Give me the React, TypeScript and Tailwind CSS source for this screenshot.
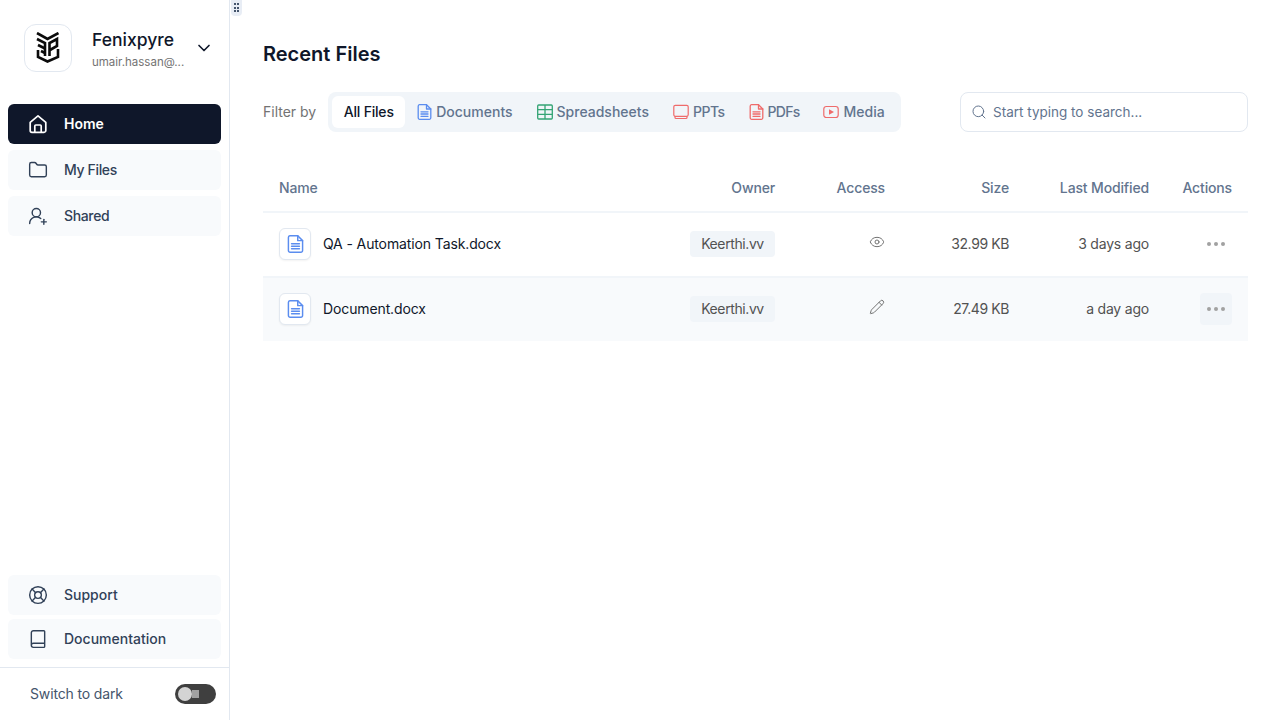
import { Book, ChevronDown, Eye, Folder, LifeBuoy, Pencil, Search, UserRoundPlus } from 'lucide-react'
import type { ReactNode } from 'react'

const FONT = "font-['Inter','Liberation_Sans',sans-serif]"

// doc icon, also used for the pdf filter with another colour
function DocIcon({ className }: { className: string }) {
  return (
    <svg viewBox="0 0 15 16" fill="none" stroke="currentColor" strokeWidth="1.300" strokeLinejoin="round" strokeLinecap="round" className={className}>
      <path d="M2.500 0.700h7L13.800 5v8.800a1.500 1.500 0 0 1-1.500 1.500H2.700a1.500 1.500 0 0 1-1.500-1.500V2.200a1.500 1.500 0 0 1 1.300-1.500Z" />
      <path d="M9.500 0.700V5h4.300" />
      <path d="M4 7.800h7M4 10h7M4 12.300h7" />
    </svg>
  )
}

function SheetIcon() {
  return (
    <svg viewBox="0 0 16 16" fill="none" stroke="#34a474" strokeWidth="1.300" className="w-4 h-4 shrink-0">
      <rect x="0.700" y="1" width="14.600" height="14" rx="1" />
      <path d="M0.700 5.700h14.600M0.700 10.300h14.600M8 1v14" />
    </svg>
  )
}

function PptIcon() {
  return (
    <svg viewBox="0 0 16 16" fill="none" stroke="#ef6b6b" strokeWidth="1.200" className="w-4 h-4 shrink-0">
      <rect x="0.800" y="1.300" width="14.400" height="11" rx="1.500" />
      <path d="M2 12.300v1.200a1 1 0 0 0 1 1h10a1 1 0 0 0 1-1v-1.200" />
    </svg>
  )
}

function MediaIcon() {
  return (
    <svg viewBox="0 0 16 16" fill="none" className="w-4 h-4 shrink-0">
      <rect x="0.800" y="2.500" width="14.400" height="11" rx="2.500" stroke="#ef6b6b" strokeWidth="1.200" />
      <path d="M6 5.300v5.400l5-2.700Z" fill="#ef6b6b" />
    </svg>
  )
}

function HomeIcon() {
  return (
    <svg viewBox="0 0 20 20" fill="none" stroke="currentColor" strokeWidth="1.700" strokeLinejoin="round" className="w-5 h-5">
      <path d="M2.200 8.300 10 1.800l7.800 6.500v8.200a1.800 1.800 0 0 1-1.800 1.800H4a1.800 1.800 0 0 1-1.800-1.800Z" />
      <path d="M6.800 18v-6a1 1 0 0 1 1-1h4.400a1 1 0 0 1 1 1v6" />
    </svg>
  )
}

function Logo() {
  return (
    <svg viewBox="0 0 24 31" fill="none" stroke="#0b0b0b" strokeWidth="2.600" className="w-6 h-[31px]">
      <path d="M1 1 11.500 7 22.500 1" />
      <path d="M1 7 9 11V24" />
      <path d="M2 13 9 16.500" />
      <path d="M5 19 9 21" />
      <path d="M13.500 24V11L21 7V14L14 18" />
      <path d="M2 18V25L11.500 29.500 22 25V17" />
    </svg>
  )
}

const FILTERS: { label: string; icon: ReactNode; cls: string }[] = [
  { label: 'Documents', icon: <DocIcon className="w-[15px] h-4 shrink-0 text-[#5b8def]" />, cls: 'gap-1' },
  { label: 'Spreadsheets', icon: <SheetIcon />, cls: 'gap-1' },
  { label: 'PPTs', icon: <PptIcon />, cls: 'gap-1 tracking-[-0.5px]' },
  { label: 'PDFs', icon: <DocIcon className="w-[15px] h-4 shrink-0 text-[#ef6b6b]" />, cls: 'gap-1 tracking-[-0.75px]' },
  { label: 'Media', icon: <MediaIcon />, cls: 'gap-1' },
]

const GRID = 'grid grid-cols-[410px_118px_110px_124px_140px_83px] items-center'

function NavItem({ icon, label, active, tight }: { icon: ReactNode; label: string; active?: boolean; tight?: boolean }) {
  return (
    <div
      className={`h-10 rounded-md flex items-center gap-4 pl-[20px] text-sm ${
        active ? 'bg-[#0f172a] text-white font-semibold' : 'bg-slate-50 text-slate-700 font-medium'
      } ${tight ? 'tracking-[-0.35px]' : ''}`}
    >
      {icon}
      <span>{label}</span>
    </div>
  )
}

function Dots() {
  return (
    <div className="flex gap-[3px]">
      <span className="w-1 h-1 rounded-full bg-neutral-400" />
      <span className="w-1 h-1 rounded-full bg-neutral-400" />
      <span className="w-1 h-1 rounded-full bg-neutral-400" />
    </div>
  )
}

function Row({ name, access, size, modified, hover }: { name: string; access: ReactNode; size: string; modified: string; hover?: boolean }) {
  return (
    <div className={`${GRID} h-[63px] pb-px text-sm ${hover ? 'bg-slate-50' : ''}`}>
      <div className="px-4 flex items-center gap-3">
        <div className="w-8 h-8 rounded-md border border-slate-200 bg-white flex items-center justify-center shadow-xs">
          <DocIcon className="w-[17px] h-[18px] text-[#5b8def]" />
        </div>
        <span className="text-[#0f172a] tracking-[-0.12px]">{name}</span>
      </div>
      <div className="px-4 flex justify-end">
        <span className="h-[26px] w-[85px] rounded bg-slate-100 flex items-center justify-center text-neutral-600 tracking-[-0.4px]">Keerthi.vv</span>
      </div>
      <div className="px-4 flex justify-end text-neutral-500 pb-1">{access}</div>
      <div className="px-4 text-right text-neutral-600 tracking-[-0.4px]">{size}</div>
      <div className="px-4 text-right text-neutral-600 tracking-[-0.2px]">{modified}</div>
      <div className="px-4 flex justify-end">
        <div className={`w-8 h-8 rounded flex items-center justify-center ${hover ? 'bg-slate-100' : ''}`}>
          <Dots />
        </div>
      </div>
    </div>
  )
}

export default function App() {
  return (
    <div className={`h-[720px] w-[1280px] flex bg-white overflow-hidden relative ${FONT}`}>
      {/* ---------- Sidebar ---------- */}
      <aside className="w-[230px] shrink-0 border-r border-slate-200 flex flex-col">
        <div className="h-[104px] pl-6 pr-[15px] pb-[9px] flex items-center">
          <div className="w-12 h-12 rounded-xl border border-slate-200 flex items-center justify-center shrink-0">
            <Logo />
          </div>
          <div className="ml-5 flex-1 min-w-0">
            <div className="text-[17.5px] leading-7 font-medium text-[#0f172a]">Fenixpyre</div>
            <div className="text-[11.5px] leading-4 text-neutral-500">umair.hassan@...</div>
          </div>
          <ChevronDown className="w-5 h-5 text-[#0f172a] shrink-0" />
        </div>
        <nav className="px-2 flex flex-col gap-[6px]">
          <NavItem active icon={<HomeIcon />} label="Home" />
          <NavItem tight icon={<Folder className="w-5 h-5" strokeWidth={1.7} />} label="My Files" />
          <NavItem tight icon={<UserRoundPlus className="w-5 h-5" strokeWidth={1.7} />} label="Shared" />
        </nav>
        <div className="mt-auto px-2 flex flex-col gap-1 pb-2">
          <NavItem icon={<LifeBuoy className="w-5 h-5" strokeWidth={1.7} />} label="Support" />
          <NavItem icon={<Book className="w-5 h-5" strokeWidth={1.7} />} label="Documentation" />
        </div>
        <div className="h-[53px] border-t border-slate-200 pl-[30px] pr-[13px] flex items-center justify-between text-sm text-slate-600 tracking-[-0.15px]">
          <span>Switch to dark</span>
          <div className="w-[41px] h-5 rounded-full bg-[#3f3f3f] flex items-center pl-[3px]">
            <span className="w-[14px] h-[14px] rounded-full bg-neutral-300" />
            <span className="w-[7px] h-[8px] bg-neutral-400" />
          </div>
        </div>
      </aside>

      {/* ---------- Resize handle ---------- */}
      <div className="absolute left-[231px] top-0 w-[11px] h-4 bg-[#e8edf5] rounded-b-sm grid grid-cols-2 gap-[1px] px-[3px] py-[3px]">
        <span className="bg-slate-600 h-[2px] w-[2px]" />
        <span className="bg-slate-600 h-[2px] w-[2px]" />
        <span className="bg-slate-600 h-[2px] w-[2px]" />
        <span className="bg-slate-600 h-[2px] w-[2px]" />
        <span className="bg-slate-600 h-[2px] w-[2px]" />
        <span className="bg-slate-600 h-[2px] w-[2px]" />
      </div>

      {/* ---------- Main ---------- */}
      <main className="flex-1 pl-[33px] pr-8 pt-[41px]">
        <h1 className="text-xl leading-[26px] font-semibold text-[#0f172a]">Recent Files</h1>
        <div className="mt-[25px] flex items-center">
          <span className="text-sm text-neutral-500 mr-3">Filter by</span>
          <div className="h-10 bg-slate-100 rounded-lg flex items-center px-1">
            <div className="h-8 w-[73px] rounded-md bg-white text-sm font-medium text-[#0f172a] flex items-center justify-center tracking-[-0.2px]">All Files</div>
            {FILTERS.map((f) => (
              <div key={f.label} className={`h-8 px-3 flex items-center text-sm font-medium text-slate-500 ${f.cls}`}>
                {f.icon}
                <span>{f.label}</span>
              </div>
            ))}
          </div>
          <div className="ml-auto w-[288px] h-10 rounded-lg border border-slate-200 flex items-center px-[10px] gap-[6px] text-[13.5px] text-slate-500">
            <Search className="w-4 h-4" strokeWidth={1.5} />
            <span>Start typing to search...</span>
          </div>
        </div>

        <div className="mt-[33px]">
          <div className={`${GRID} h-[48px] border-b-2 border-slate-100 text-sm font-medium text-slate-500 tracking-[-0.15px]`}>
            <div className="px-4">Name</div>
            <div className="px-4 text-right">Owner</div>
            <div className="px-4 text-right">Access</div>
            <div className="px-4 text-right">Size</div>
            <div className="px-4 text-right whitespace-nowrap">Last Modified</div>
            <div className="px-4 text-right">Actions</div>
          </div>
          <div className="border-b-2 border-slate-100">
            <Row name="QA - Automation Task.docx" access={<Eye className="w-4 h-4" strokeWidth={1.5} />} size="32.99 KB" modified="3 days ago" />
          </div>
          <Row hover name="Document.docx" access={<Pencil className="w-4 h-4" strokeWidth={1.5} />} size="27.49 KB" modified="a day ago" />
        </div>
      </main>
    </div>
  )
}
